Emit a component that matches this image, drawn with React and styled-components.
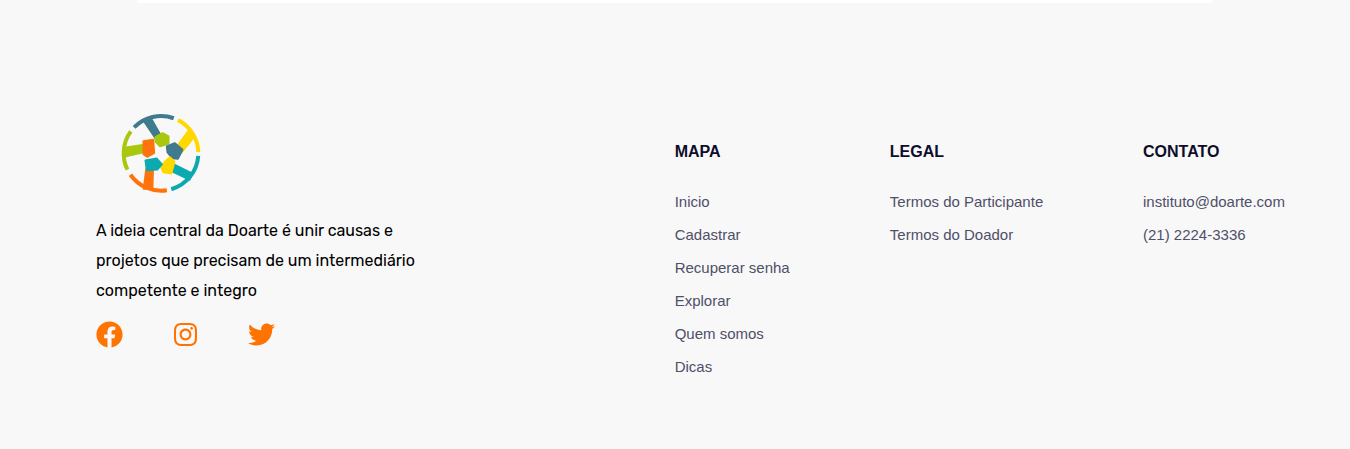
import React from "react";
import styled, { createGlobalStyle } from "styled-components";
import { FaFacebook, FaInstagram, FaTwitter } from "react-icons/fa";

const GlobalStyle = createGlobalStyle`
  html, body {
    margin: 0;
    padding: 0;
    background: #f8f8f8;
  }
`;

const Page = styled.div`
  height: 449px;
  overflow: hidden;
  background: #f8f8f8;
`;

const TopCard = styled.div`
  width: 1076px;
  height: 3px;
  margin: 0 auto;
  background: #ffffff;
  border-radius: 0 0 8px 8px;
`;

const Footer = styled.footer`
  display: flex;
  justify-content: space-between;
  padding: 102px 65px 0 96px;
`;

const Brand = styled.div`
  width: 340px;
`;

const LogoWrap = styled.div`
  width: 100px;
  height: 95px;
  margin-left: 14px;
`;

const About = styled.p`
  margin: 16px 0 0;
  font-family: Rubik, Roboto, "Liberation Sans", sans-serif;
  font-size: 16px;
  line-height: 30px;
  color: #000000;
`;

const Socials = styled.div`
  display: flex;
  align-items: center;
  gap: 51px;
  margin-top: 15px;
  color: #ff7300;
`;

const InstagramIcon = styled(FaInstagram)`
  width: 23px;
`;

const Nav = styled.div`
  display: flex;
`;

const Column = styled.div`
  width: ${(props) => props.$width}px;
  padding-top: 38px;
  font-family: "Liberation Sans", Arial, sans-serif;
`;

const Heading = styled.h4`
  margin: 0 0 30px;
  font-size: 16px;
  line-height: 18px;
  font-weight: 700;
  color: #0d0d2b;
`;

const LinkList = styled.ul`
  display: flex;
  flex-direction: column;
  gap: 11px;
  margin: 0;
  padding: 0;
  list-style: none;
`;

const LinkItem = styled.li`
  font-size: 15px;
  line-height: 22px;
  color: #4f4f68;
  white-space: nowrap;
`;

const columns = [
  { title: "MAPA", width: 215.2, links: ["Inicio", "Cadastrar", "Recuperar senha", "Explorar", "Quem somos", "Dicas"] },
  { title: "LEGAL", width: 253.2, links: ["Termos do Participante", "Termos do Doador"] },
  { title: "CONTATO", width: 142, links: ["instituto@doarte.com", "(21) 2224-3336"] },
];

// ring pieces of the logo, angles clockwise from the top
const polar = (deg) => {
  const rad = (deg * Math.PI) / 180;
  return `${153 + 112 * Math.sin(rad)} ${145 - 112 * Math.cos(rad)}`;
};
const arc = (from, to) => `M${polar(from)}A112 112 0 0 1 ${polar(to)}`;

const DARK = "#3f7a8f";
const YELLOW = "#ffd800";
const TEAL = "#0fa9b0";
const ORANGE = "#ff7308";
const GREEN = "#a8c70f";

function Logo() {
  return (
    <svg width="100" height="95" viewBox="0 0 300 285" fill="none">
      <defs>
        <filter id="soft" x="-5%" y="-5%" width="110%" height="110%">
          <feGaussianBlur stdDeviation="1.6" />
        </filter>
      </defs>
      <g filter="url(#soft)">
        <g strokeWidth="12">
          <path d={arc(-46, 20)} stroke={DARK} />
          <path d={arc(27, 88)} stroke={YELLOW} />
          <path d={arc(94, 164)} stroke={TEAL} />
          <path d={arc(171, 235)} stroke={ORANGE} />
          <path d={arc(244, 306)} stroke={GREEN} />
        </g>
        <path d="M98 48L124 36L156 92L136 104Z" fill={DARK} />
        <path d="M236 72L258 94L214 148L190 134Z" fill={YELLOW} />
        <path d="M190 174L250 204L240 228L182 200Z" fill={TEAL} />
        <path d="M106 190L132 190L130 254L98 254Z" fill={ORANGE} />
        <path d="M38 126L102 116L104 144L42 158Z" fill={GREEN} />
        <g strokeWidth="5" strokeLinejoin="round">
          <path d="M100 108L130 104L133 144L112 156L100 148Z" fill={ORANGE} stroke={ORANGE} />
          <path d="M136 96L158 84L176 94L176 116L150 124L136 110Z" fill={GREEN} stroke={GREEN} />
          <path d="M170 124L194 114L218 134L204 162L186 160L172 142Z" fill={DARK} stroke={DARK} />
          <path d="M164 170L180 156L194 170L184 206L160 202L152 186Z" fill={YELLOW} stroke={YELLOW} />
          <path d="M106 166L140 160L156 178L142 194L110 196Z" fill={TEAL} stroke={TEAL} />
        </g>
      </g>
    </svg>
  );
}

export default function App() {
  return (
    <Page>
      <GlobalStyle />
      <TopCard />
      <Footer>
        <Brand>
          <LogoWrap>
            <Logo />
          </LogoWrap>
          <About>
            A ideia central da Doarte é unir causas e projetos que precisam de um intermediário competente e integro
          </About>
          <Socials>
            <FaFacebook size={27} />
            <InstagramIcon size={27} />
            <FaTwitter size={27} />
          </Socials>
        </Brand>
        <Nav>
          {columns.map((col) => (
            <Column key={col.title} $width={col.width}>
              <Heading>{col.title}</Heading>
              <LinkList>
                {col.links.map((link) => (
                  <LinkItem key={link}>{link}</LinkItem>
                ))}
              </LinkList>
            </Column>
          ))}
        </Nav>
      </Footer>
    </Page>
  );
}
